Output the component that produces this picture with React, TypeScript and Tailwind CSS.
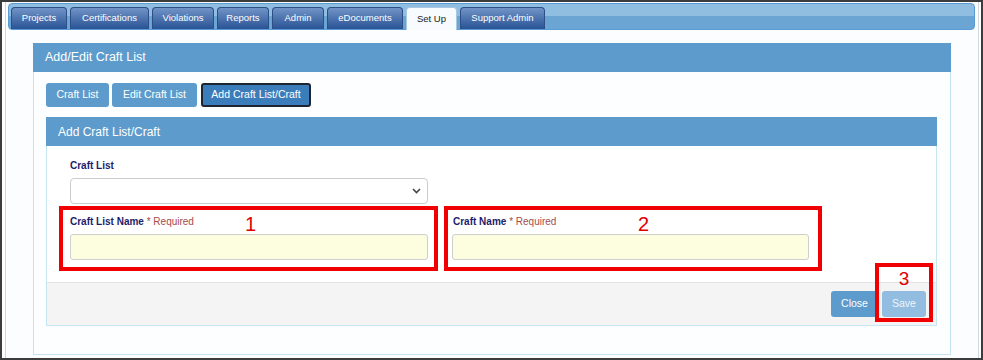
import React from "react";

const tabs = [
  { name: "Projects", w: "w-[56px]" },
  { name: "Certifications", w: "w-[79px]" },
  { name: "Violations", w: "w-[62px]" },
  { name: "Reports", w: "w-[52px]" },
  { name: "Admin", w: "w-[52px]" },
  { name: "eDocuments", w: "w-[76px]" },
  { name: "Set Up", w: "w-[51px]", active: true },
  { name: "Support Admin", w: "w-[85px]" },
];

const Label = ({ text, required }: { text: string; required?: boolean }) => (
  <div className="text-[10px] leading-[14px] font-bold text-[#1c1c6b]">
    {text}
    {required && <span className="font-normal text-[#a54b4b]"> * Required</span>}
  </div>
);

const App = () => {
  return (
    <div
      className="w-[983px] h-[360px] border-2 border-[#3c3c3c] bg-white overflow-hidden"
      style={{ fontFamily: '"Liberation Sans", Arial, sans-serif' }}
    >
      <div className="h-full ml-[3px] mr-[2px] border-x border-[#cfd8df] bg-[#fbfdfe] flex flex-col">
        {/* top tab bar */}
        <div className="mt-[1px] ml-[2px] mr-[3px] h-[27px] rounded-[4px] border border-[#5a9bd5] bg-gradient-to-b from-[#8fbee1] from-50% to-[#6aa5d3] to-50% flex items-end gap-[3px] pl-[2px]">
          {tabs.map((t) =>
            t.active ? (
              <div
                key={t.name}
                className={`${t.w} h-[23px] -mb-px rounded-t-[4px] border border-b-0 border-[#a9c7e2] bg-[#f7fbfe] text-[#1a1a1a] text-[9.5px] flex items-center justify-center`}
              >
                {t.name}
              </div>
            ) : (
              <div
                key={t.name}
                className={`${t.w} h-[22px] rounded-t-[4px] border border-b-0 border-[#2d4f85] bg-gradient-to-b from-[#7194c7] to-[#2a5395] text-white text-[9.5px] flex items-center justify-center`}
              >
                {t.name}
              </div>
            )
          )}
        </div>

        {/* main panel */}
        <div className="ml-[27px] mt-[13px] w-[918px] h-[312px] border-x border-b border-[#c2e3ef] bg-[#fdfeff] flex flex-col">
          <div className="h-[29px] bg-[#5c9bcc] text-white text-[12.5px] flex items-center pl-[12px] -mx-px">
            Add/Edit Craft List
          </div>
          <div className="px-[12px] pt-[11px]">
            <div className="flex gap-[3px]">
              <button className="w-[63px] h-[24px] rounded-[3px] bg-[#5c9bcc] text-white text-[10.5px]">Craft List</button>
              <button className="w-[85px] h-[24px] rounded-[3px] bg-[#5c9bcc] text-white text-[10.5px]">Edit Craft List</button>
              <button className="ml-[1px] w-[110px] h-[24px] rounded-[3px] bg-[#3b7dba] border-2 border-[#1c2633] text-white text-[10.5px]">
                Add Craft List/Craft
              </button>
            </div>

            {/* inner panel */}
            <div className="mt-[10px] w-[891px] h-[209px] border-x border-b border-[#c6e6f2] bg-white flex flex-col">
              <div className="h-[29px] bg-[#5c9bcc] text-white text-[12px] flex items-center pl-[12px] -mx-px">
                Add Craft List/Craft
              </div>
              <div className="pl-[23px] pt-[13px]">
                <Label text="Craft List" />
                <div className="mt-[5px] w-[358px] h-[26px] rounded-[4px] border border-[#cccccc] bg-white flex items-center justify-end pr-[6px]">
                  <svg width="9" height="6" viewBox="0 0 9 6" fill="none">
                    <path d="M1 1l3.5 3.5L8 1" stroke="#444" strokeWidth="1.6" />
                  </svg>
                </div>
              </div>
              <div className="mt-[2px] pl-[12px] flex gap-[6px]">
                <div className="relative w-[379px] h-[65px] border-4 border-[#f00000] pl-[7px] pt-[5px]">
                  <Label text="Craft List Name" required />
                  <div className="mt-[5px] w-[358px] h-[26px] rounded-[3px] border border-[#cfcfcf] bg-[#fdfde0]" />
                  <span className="absolute left-[182px] top-[2px] text-[20px] leading-[24px] text-[#e00000]">1</span>
                </div>
                <div className="relative w-[378px] h-[65px] border-4 border-[#f00000] pl-[4px] pt-[5px]">
                  <div className="pl-[1px]">
                    <Label text="Craft Name" required />
                  </div>
                  <div className="mt-[5px] w-[357px] h-[26px] rounded-[3px] border border-[#cfcfcf] bg-[#fdfde0]" />
                  <span className="absolute left-[190px] top-[2px] text-[20px] leading-[24px] text-[#e00000]">2</span>
                </div>
              </div>
              <div className="relative mt-auto h-[43px] border-t border-[#e3e3e3] bg-[#f4f4f4] flex justify-end items-start pt-[8px] pr-[10px] gap-[4px]">
                <button className="w-[47px] h-[26px] rounded-[3px] bg-[#5c9bcc] text-white text-[10.5px]">Close</button>
                <button className="w-[44px] h-[26px] rounded-[3px] bg-[#93bde0] text-[#eef5fb] text-[10.5px]">Save</button>
                <div className="absolute right-[3px] top-[-20px] w-[58px] h-[59px] border-4 border-[#f00000] flex justify-center">
                  <span className="text-[19px] leading-[20px] text-[#e00000] mt-[2px]">3</span>
                </div>
              </div>
            </div>
          </div>
        </div>
      </div>
    </div>
  );
};

export default App;
